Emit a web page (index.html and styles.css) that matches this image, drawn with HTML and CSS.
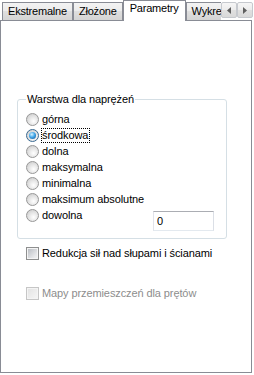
FILE: index.html
```html
<!DOCTYPE html>
<html lang="pl">
<head>
    <meta charset="UTF-8">
    <title>Parametry</title>
    <link rel="stylesheet" href="styles.css">
</head>
<body>
    <div class="window">
        <div class="tabstrip">
            <div class="tabs">
                <div class="tab">Ekstremalne</div>
                <div class="tab">Złożone</div>
                <div class="tab tab-active">Parametry</div>
                <div class="tab">Wykresy</div>
            </div>
            <div class="scroll">
                <span class="scroll-btn">
                    <svg width="4" height="7" viewBox="0 0 4 7"><polygon points="4,0 4,7 0,3.5" fill="#5f5f5f"/></svg>
                </span>
                <span class="scroll-btn">
                    <svg width="4" height="7" viewBox="0 0 4 7"><polygon points="0,0 0,7 4,3.5" fill="#5f5f5f"/></svg>
                </span>
            </div>
        </div>

        <div class="panel">
            <fieldset class="group">
                <legend>Warstwa dla naprężeń</legend>
                <div class="opt"><span class="radio"></span><span class="lbl">górna</span></div>
                <div class="opt"><span class="radio radio-on"></span><span class="lbl lbl-focus">środkowa</span></div>
                <div class="opt"><span class="radio"></span><span class="lbl">dolna</span></div>
                <div class="opt"><span class="radio"></span><span class="lbl">maksymalna</span></div>
                <div class="opt"><span class="radio"></span><span class="lbl">minimalna</span></div>
                <div class="opt"><span class="radio"></span><span class="lbl">maksimum absolutne</span></div>
                <div class="opt-row">
                    <div class="opt"><span class="radio"></span><span class="lbl">dowolna</span></div>
                    <input class="field" type="text" value="0">
                </div>
            </fieldset>

            <div class="check"><span class="box"></span><span class="lbl">Redukcja sił nad słupami i ścianami</span></div>
            <div class="check check-off"><span class="box"></span><span class="lbl">Mapy przemieszczeń dla prętów</span></div>
        </div>
    </div>
</body>
</html>
```

FILE: styles.css
```css
body {
    margin: 0;
    background-color: #fff;
    font-family: "Liberation Sans", Arial, sans-serif;
    font-size: 11px;
    letter-spacing: -0.1px;
    color: #000;
}
.window {
    width: 253px;
}
.tabstrip {
    display: flex;
    height: 21px;
    margin-bottom: -1px;
    position: relative;
    z-index: 1;
    letter-spacing: -0.2px;
}
.tabs {
    display: flex;
    align-items: flex-start;
    flex: 1;
    min-width: 0;
    padding-left: 2px;
    overflow: hidden;
}
.tab {
    margin-top: 2px;
    height: 18px;
    box-sizing: border-box;
    padding: 2px 5px 0;
    border: 1px solid #898c95;
    border-bottom: none;
    background: linear-gradient(#f3f3f3, #ebebeb 50%, #dfdfdf 50%, #d4d4d4);
    line-height: 13px;
    white-space: nowrap;
}
.tab-active {
    margin-top: 0;
    height: 21px;
    padding: 1px 6px 0;
    background: #fff;
}
.scroll {
    display: flex;
    padding-top: 2px;
}
.scroll-btn {
    width: 16px;
    height: 16px;
    box-sizing: border-box;
    border: 1px solid #c6c9ce;
    border-radius: 2px;
    background: linear-gradient(#f6f6f6, #ececec 50%, #e0e0e0 50%, #d9d9d9);
    display: flex;
    align-items: center;
    justify-content: center;
}
.panel {
    width: 252px;
    height: 353px;
    box-sizing: border-box;
    border: 1px solid #898c95;
    background-color: #fff;
}
.group {
    margin: 72px 0 0 16px;
    width: 210px;
    box-sizing: border-box;
    border: 1px solid #d5dfe5;
    border-radius: 3px;
    padding: 5px 8px 7px;
}
.group legend {
    margin-left: 0;
    padding: 0 1px;
    line-height: 13px;
}
.opt {
    display: flex;
    align-items: center;
    height: 16px;
}
.opt-row {
    display: flex;
    align-items: flex-start;
    justify-content: space-between;
}
.radio {
    position: relative;
    flex-shrink: 0;
    width: 13px;
    height: 13px;
    box-sizing: border-box;
    border: 1px solid #979797;
    border-radius: 50%;
    background: radial-gradient(circle at 60% 65%, #ffffff 0, #e6e6e6 45%, #c4c4c4 100%);
}
.radio-on {
    border-color: #3a6a92;
}
.radio-on::after {
    content: "";
    position: absolute;
    left: 2px;
    top: 2px;
    width: 7px;
    height: 7px;
    border-radius: 50%;
    background: radial-gradient(circle at 40% 35%, #d9f3ff 0, #43a8ea 45%, #0d4a8a 100%);
}
.lbl {
    margin-left: 2px;
    padding-right: 1px;
    border: 1px dotted transparent;
    line-height: 13px;
    white-space: nowrap;
}
.lbl-focus {
    border-color: #000;
}
.field {
    margin: 4px 4px 0 0;
    width: 61px;
    height: 20px;
    box-sizing: border-box;
    padding: 0 3px;
    border: 1px solid;
    border-color: #abadb3 #dbdfe6 #e3e9ef #e2e3ea;
    font: inherit;
    color: #000;
    outline: none;
}
.check {
    display: flex;
    align-items: center;
    height: 16px;
    margin: 6px 0 0 25px;
}
.check + .check {
    margin-top: 24px;
}
.box {
    flex-shrink: 0;
    width: 13px;
    height: 13px;
    box-sizing: border-box;
    border: 1px solid #8e8f8f;
    box-shadow: inset 0 0 0 1px #f4f4f4;
    background: linear-gradient(135deg, #b4b8be, #e6e7e9 70%, #f4f4f4);
}
.check-off {
    color: #8d8d8d;
}
.check-off .box {
    border-color: #c6c6c6;
    background: linear-gradient(135deg, #e2e2e2, #f6f6f6);
}
```
